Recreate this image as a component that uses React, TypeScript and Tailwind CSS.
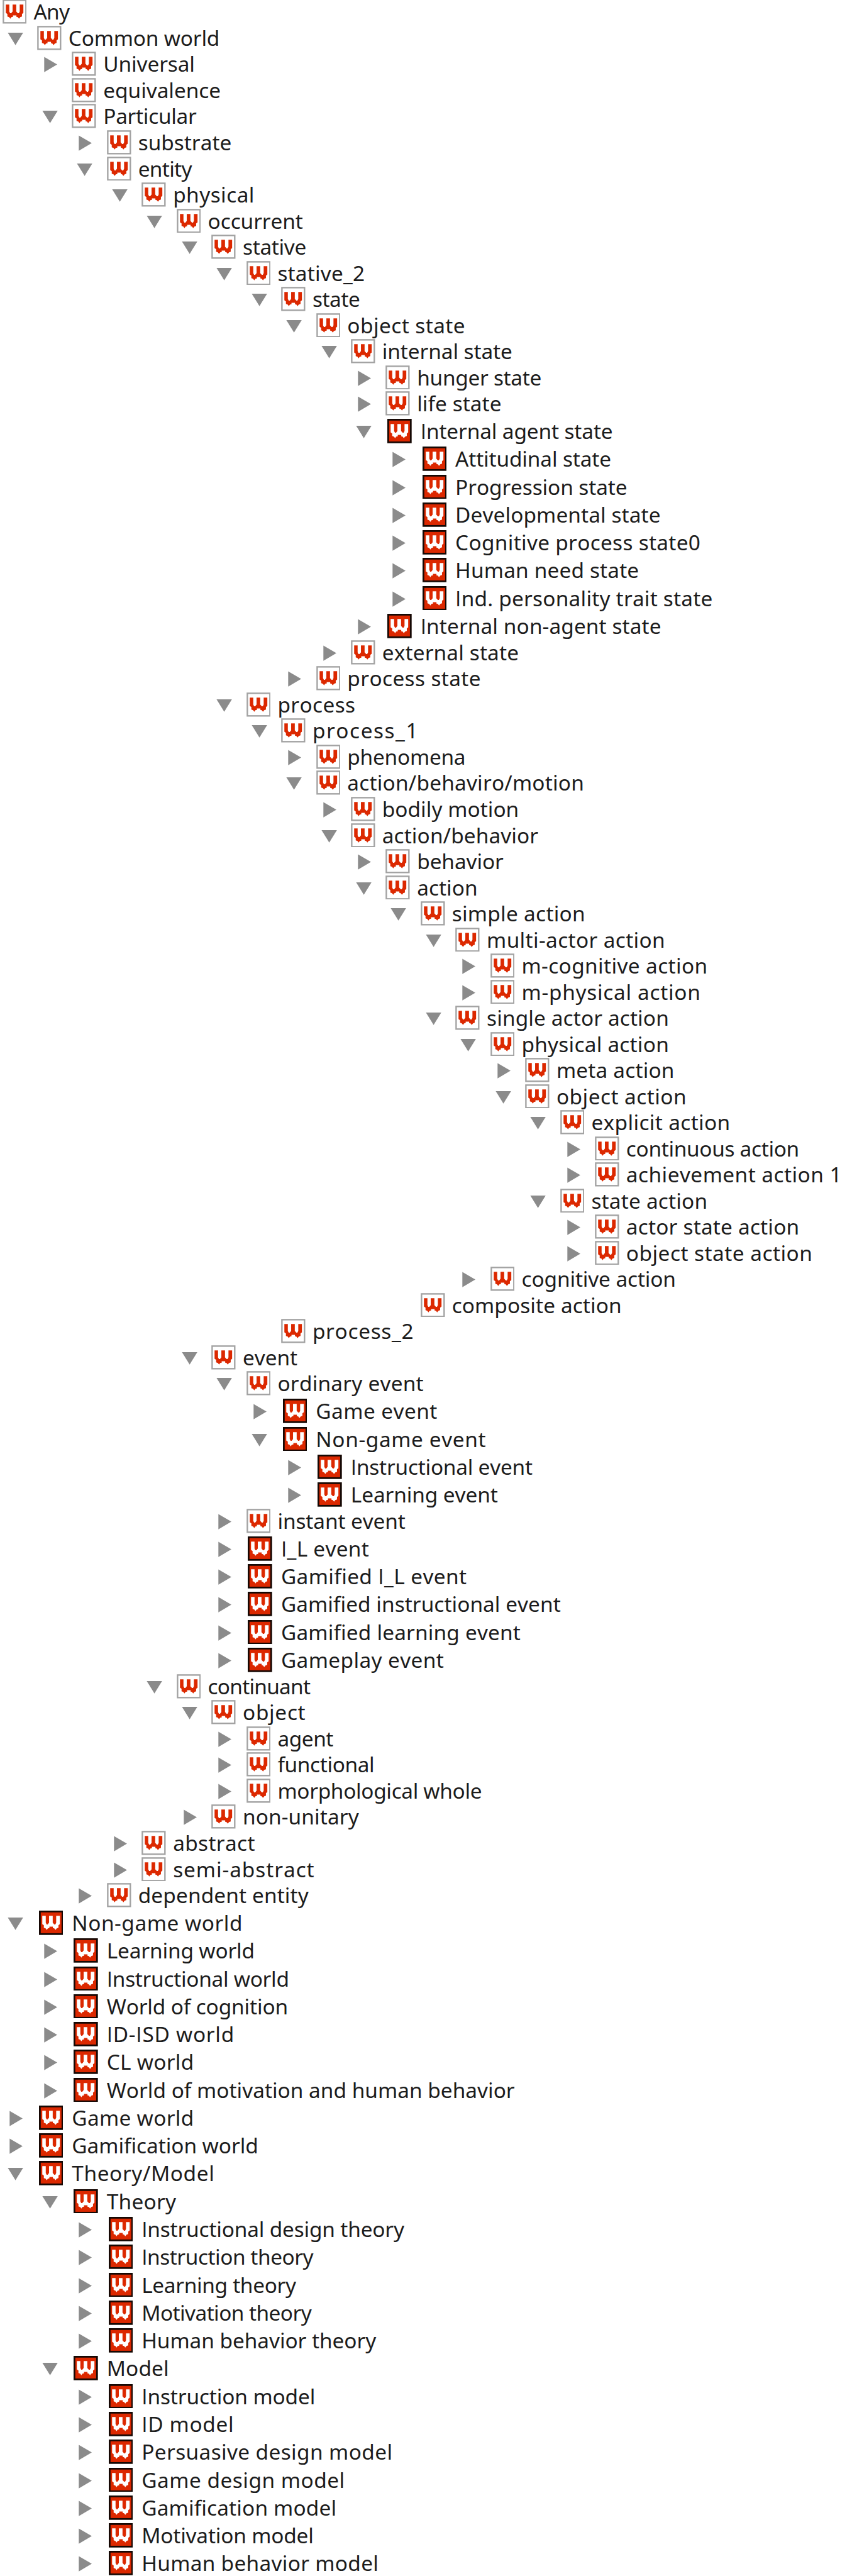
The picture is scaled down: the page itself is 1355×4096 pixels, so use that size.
import React from "react";

type Kind = "open" | "closed" | "leaf";

interface TreeNode {
  label: string;
  // Horizontal position at which the label ends.
  end: number;
  kind: Kind;
  solid: boolean;
  children: TreeNode[];
}

const UNIT = 2.768;
const INDENT = 55.44;
const LEFT = 3.6;
const SCALE = 0.8782;

// One line per node: depth, toggle (v open, > closed, . none), style (o outlined, s solid), label end, label.
const SOURCE = `
0 . o 127.7 Any
1 v o 395 Common world
2 > o 350 Universal
2 . o 399 equivalence
2 v o 356.5 Particular
3 > o 417.7 substrate
3 v o 349 entity
4 v o 457.6 physical
5 v o 548 occurrent
6 v o 554 stative
7 v o 659.3 stative_2
8 v o 651.5 state
9 v o 841.4 object state
10 v o 927 internal state
11 > o 980 hunger state
11 > o 907.3 life state
11 v s 1109 Internal agent state
12 > s 1106 Attitudinal state
12 > s 1133.6 Progression state
12 > s 1194.6 Developmental state
12 > s 1266.5 Cognitive process state0
12 > s 1156.3 Human need state
12 > s 1289 Ind. personality trait state
11 > s 1196.6 Internal non-agent state
10 > o 937.8 external state
9 > o 869 process state
7 v o 641.6 process
8 v o 748 process_1
9 > o 841.4 phenomena
9 v o 1054 action/behaviro/motion
10 > o 936.8 bodily motion
10 v o 975.2 action/behavior
11 > o 912.2 behavior
11 v o 862 action
12 v o 1056.9 simple action
13 v o 1201.5 multi-actor action
14 > o 1278.3 m-cognitive action
14 > o 1265.5 m-physical action
13 v o 1208.4 single actor action
14 v o 1208.4 physical action
15 > o 1218.3 meta action
15 v o 1240 object action
16 v o 1318.6 explicit action
17 > o 1444.6 continuous action
17 > o 1515.5 achievement action 1
16 v o 1278.3 state action
17 > o 1444.6 actor state action
17 > o 1468.2 object state action
14 > o 1221.2 cognitive action
12 . o 1122.8 composite action
8 . o 746.9 process_2
6 v o 538 event
7 v o 765.6 ordinary event
8 > s 791 Game event
8 v s 879 Non-game event
9 > s 963.8 Instructional event
9 > s 900.9 Learning event
7 > o 733.5 instant event
7 > s 667.4 I_L event
7 > s 844.2 Gamified I_L event
7 > s 1014.7 Gamified instructional event
7 > s 942 Gamified learning event
7 > s 803 Gameplay event
5 v o 562.5 continuant
6 v o 553 object
7 > o 604 agent
7 > o 675.4 functional
7 > o 872 morphological whole
6 > o 651 non-unitary
4 > o 461 abstract
4 > o 568.2 semi-abstract
3 > o 560 dependent entity
1 v s 436.2 Non-game world
2 > s 458.5 Learning world
2 > s 521 Instructional world
2 > s 518 World of cognition
2 > s 421 ID-ISD world
2 > s 348.2 CL world
2 > s 931.8 World of motivation and human behavior
1 > s 348.2 Game world
1 > s 465 Gamification world
1 v s 385.2 Theory/Model
2 v s 320.2 Theory
3 > s 733.4 Instructional design theory
3 > s 569 Instruction theory
3 > s 537.6 Learning theory
3 > s 565.7 Motivation theory
3 > s 682.4 Human behavior theory
2 v s 303 Model
3 > s 568 Instruction model
3 > s 420.3 ID model
3 > s 707.7 Persuasive design model
3 > s 621.4 Game design model
3 > s 606.4 Gamification model
3 > s 565.2 Motivation model
3 > s 682.5 Human behavior model
`;

function parse(source: string): TreeNode[] {
  const roots: TreeNode[] = [];
  const stack: TreeNode[] = [];
  for (const line of source.trim().split("\n")) {
    const [depthText, toggle, style, end, ...words] = line.split(" ");
    const depth = Number(depthText);
    const node: TreeNode = {
      label: words.join(" "),
      end: Number(end) * SCALE,
      kind: toggle === "v" ? "open" : toggle === ">" ? "closed" : "leaf",
      solid: style === "s",
      children: [],
    };
    stack.length = depth;
    (depth === 0 ? roots : stack[depth - 1].children).push(node);
    stack.push(node);
  }
  return roots;
}

const TREE = parse(SOURCE);

const segments = (label: string) => label.split(/(I)/).filter(Boolean);

const context = document.createElement("canvas").getContext("2d")!;

function spacingFor(label: string, width: number): number {
  let natural = 0;
  let bearing = 0;
  for (const part of segments(label)) {
    context.font = part === "I" ? '33.4px "Open Sans"' : '33.4px "Noto Sans"';
    const m = context.measureText(part);
    natural += m.width;
    bearing = m.width - m.actualBoundingBoxRight;
  }
  return (width - (natural - bearing)) / (label.length - 1);
}

function Toggle({ kind }: { kind: Kind }) {
  return (
    <svg className="h-[38.7px] w-[55.44px] shrink-0" viewBox="0 0 55.44 38.7" fill="#8b8b8b">
      {kind === "open" && <path d="M8.4 10.9H32.8L20.6 30.8Z" />}
      {kind === "closed" && <path d="M11.3 8.4V32.8L32 20.6Z" />}
    </svg>
  );
}

function WorldIcon({ solid }: { solid: boolean }) {
  return (
    <svg className="h-[38.7px] w-[38.7px] shrink-0" viewBox="0 0 14 14">
      <rect
        x="0.5"
        y="0.5"
        width="13"
        height="13"
        fill={solid ? "#dc2800" : "#ffffff"}
        stroke={solid ? "#160804" : "#a2a2a2"}
        strokeWidth={solid ? 1 : 0.85}
      />
      <path
        fill={solid ? "#ffffff" : "#dc2800"}
        d="M1.9 3H3.9V7L4.4 8H5L5.8 7V3H7.9V7L8.8 8H9.4L9.9 7V3H12V7.8L11.2 8.4V9.9L10.2 10.2L9.5 11.1L8.8 10.2L8 10V9.2H6V10L5.1 10.2L4.5 11.1L3.8 10.2L2.8 9.9V8.4L1.9 7.8Z"
      />
    </svg>
  );
}

function Label({ node, depth }: { node: TreeNode; depth: number }) {
  const origin = LEFT + depth * INDENT + (node.solid ? 20 : 18) * UNIT;
  const letterSpacing = spacingFor(node.label, node.end - origin);
  return (
    <span
      className={`${node.solid ? "pl-[13.9px]" : "pl-[11.1px]"} whitespace-pre font-['Noto_Sans',sans-serif] text-[33.4px] leading-[39.4px] text-[#1c1c1c] [font-kerning:none] [font-variant-ligatures:none]`}
      style={{ letterSpacing }}
    >
      {segments(node.label).map((part, i) =>
        part === "I" ? (
          <span key={i} className="font-['Open_Sans',sans-serif]">
            I
          </span>
        ) : (
          part
        ),
      )}
    </span>
  );
}

function Branch({ node, depth }: { node: TreeNode; depth: number }) {
  return (
    <li>
      <div
        className={
          node.solid
            ? "flex h-[44.288px] items-start pt-[2.4px]"
            : "flex h-[41.52px] items-start"
        }
      >
        {depth > 0 && <Toggle kind={node.kind} />}
        <div className={node.solid ? "pl-[2.7px]" : ""}>
          <WorldIcon solid={node.solid} />
        </div>
        <Label node={node} depth={depth} />
      </div>
      {node.children.length > 0 && (
        <ul className={depth > 0 ? "pl-[55.44px]" : ""}>
          {node.children.map((child) => (
            <Branch key={child.label} node={child} depth={depth + 1} />
          ))}
        </ul>
      )}
    </li>
  );
}

export default function App() {
  return (
    <main className="h-[4096px] w-[1355px] overflow-hidden bg-white">
      <ul className="-mt-[0.6px] pl-[3.6px]">
        {TREE.map((node) => (
          <Branch key={node.label} node={node} depth={0} />
        ))}
      </ul>
    </main>
  );
}
